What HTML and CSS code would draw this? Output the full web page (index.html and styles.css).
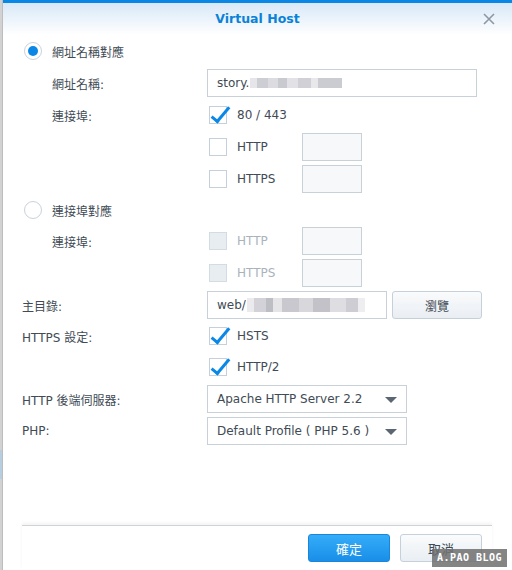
FILE: index.html
```html
<!DOCTYPE html>
<html lang="zh-Hant">
<head>
    <meta charset="UTF-8">
    <meta name="viewport" content="width=device-width, initial-scale=1.0">
    <title>Virtual Host</title>
    <link rel="stylesheet" href="styles.css">
</head>
<body>

<div class="screen">
    <div class="backdrop"></div>

    <div class="dialog">
        <div class="dialog-head">
            <span class="title">Virtual Host</span>
            <span class="close">
                <svg width="12" height="12" viewBox="0 0 12 12"><path d="M1 1 L11 11 M11 1 L1 11" stroke="#8e98a2" stroke-width="1.6" fill="none"/></svg>
            </span>
        </div>

        <div class="dialog-body">
            <!-- 網址名稱對應 -->
            <div class="row">
                <span class="radio checked"></span>
                <span class="radio-label">網址名稱對應</span>
            </div>
            <div class="row">
                <span class="field-label sub">網址名稱:</span>
                <div class="text-input host">story.<span class="blur blur-host"></span></div>
            </div>
            <div class="row">
                <span class="field-label sub">連接埠:</span>
                <span class="check checked"></span>
                <span class="check-label">80 / 443</span>
            </div>
            <div class="row">
                <span class="field-label"></span>
                <span class="check"></span>
                <span class="check-label port">HTTP</span>
                <div class="text-input small"></div>
            </div>
            <div class="row">
                <span class="field-label"></span>
                <span class="check"></span>
                <span class="check-label port">HTTPS</span>
                <div class="text-input small"></div>
            </div>

            <!-- 連接埠對應 -->
            <div class="row short">
                <span class="radio"></span>
                <span class="radio-label">連接埠對應</span>
            </div>
            <div class="row">
                <span class="field-label sub">連接埠:</span>
                <span class="check disabled"></span>
                <span class="check-label port disabled">HTTP</span>
                <div class="text-input small"></div>
            </div>
            <div class="row">
                <span class="field-label"></span>
                <span class="check disabled"></span>
                <span class="check-label port disabled">HTTPS</span>
                <div class="text-input small"></div>
            </div>

            <div class="row">
                <span class="field-label">主目錄:</span>
                <div class="text-input folder">web/<span class="blur blur-folder"></span></div>
                <button class="btn browse">瀏覽</button>
            </div>
            <div class="row short">
                <span class="field-label">HTTPS 設定:</span>
                <span class="check checked"></span>
                <span class="check-label">HSTS</span>
            </div>
            <div class="row">
                <span class="field-label"></span>
                <span class="check checked"></span>
                <span class="check-label">HTTP/2</span>
            </div>
            <div class="row">
                <span class="field-label">HTTP 後端伺服器:</span>
                <div class="select">Apache HTTP Server 2.2<span class="arrow"></span></div>
            </div>
            <div class="row">
                <span class="field-label">PHP:</span>
                <div class="select">Default Profile ( PHP 5.6 )<span class="arrow"></span></div>
            </div>
        </div>

        <div class="dialog-foot">
            <button class="btn primary">確定</button>
            <button class="btn">取消</button>
        </div>
    </div>

    <div class="watermark">A.PAO BLOG</div>
</div>

</body>
</html>
```

FILE: styles.css
```css
body {
    margin: 0;
    font-family: "DejaVu Sans", "Noto Sans CJK TC", sans-serif;
    font-size: 12px;
    color: #414b55;
    background-color: #fff;
}
.screen {
    position: relative;
    display: flex;
    width: 512px;
    height: 570px;
    overflow: hidden;
}
.backdrop {
    width: 3px;
    flex-shrink: 0;
    background: linear-gradient(to bottom, #d2d2d2 0, #d2d2d2 450px, #b7cde0 450px, #b7cde0 479px, #d2d2d2 479px);
    border-right: 1px solid #bdbdbd;
    box-sizing: border-box;
}
.dialog {
    flex: 1;
    display: flex;
    flex-direction: column;
    border-top: 3px solid #0a86e4;
    background-color: #fff;
}
.dialog-head {
    position: relative;
    height: 32px;
    display: flex;
    justify-content: center;
    align-items: center;
    background: linear-gradient(to bottom, #d8e8f7, #ffffff);
}
.title {
    font-weight: bold;
    font-size: 12.5px;
    color: #0a82d8;
    margin-top: -1px;
}
.close {
    position: absolute;
    right: 17px;
    top: 10px;
    width: 12px;
    height: 12px;
}
.close svg {
    display: block;
}
.dialog-body {
    flex: 1;
    display: flex;
    flex-direction: column;
    gap: 4px;
    padding: 2px 0 0 19px;
}
.row {
    display: flex;
    align-items: center;
    height: 28px;
}
.row.short {
    height: 26px;
}
.field-label {
    width: 185px;
    flex-shrink: 0;
    box-sizing: border-box;
}
.field-label.sub {
    padding-left: 30px;
}

/* radio */
.radio {
    position: relative;
    width: 18px;
    height: 18px;
    margin-left: 2px;
    border: 1px solid #c9d2db;
    border-radius: 50%;
    box-sizing: border-box;
    background-color: #fff;
}
.radio.checked::after {
    content: "";
    position: absolute;
    left: 3px;
    top: 3px;
    width: 10px;
    height: 10px;
    border-radius: 50%;
    background-color: #0a86e6;
}
.radio-label {
    margin-left: 10px;
}

/* checkbox */
.check {
    position: relative;
    width: 18px;
    height: 18px;
    margin-left: 2px;
    border: 1px solid #c6d0da;
    box-sizing: border-box;
    background-color: #fff;
    flex-shrink: 0;
}
.check.disabled {
    background-color: #e8edf2;
    border-color: #d3dbe3;
}
.check.checked::after {
    content: "";
    position: absolute;
    left: 6px;
    top: -4px;
    width: 6px;
    height: 17px;
    border-right: 3px solid #0a88e8;
    border-bottom: 3px solid #0a88e8;
    transform: rotate(40deg);
}
.check-label {
    margin-left: 10px;
}
.check-label.port {
    width: 65px;
}
.check-label.disabled {
    color: #a9b3bd;
}

/* inputs */
.text-input {
    height: 28px;
    border: 1px solid #c8d0d8;
    box-sizing: border-box;
    padding-left: 9px;
    display: flex;
    align-items: center;
    background-color: #fff;
}
.text-input.host {
    width: 270px;
}
.text-input.folder {
    width: 180px;
}
.text-input.small {
    width: 60px;
    background-color: #f6f8fa;
}
.blur {
    display: inline-block;
    height: 10px;
    margin-left: 1px;
}
.blur-host {
    width: 92px;
    background: linear-gradient(90deg, #e6e6ea 0, #e6e6ea 8%, #cdcdd4 8%, #cdcdd4 20%, #dcdce0 20%, #dcdce0 30%, #c9c9d0 30%, #c9c9d0 40%, #e2e2e6 40%, #e2e2e6 52%, #d0d0d6 52%, #d0d0d6 66%, #e8e8eb 66%, #e8e8eb 74%, #cbcbd2 74%, #cbcbd2 100%);
}
.blur-folder {
    width: 118px;
    height: 14px;
    background: linear-gradient(90deg, #ebebee 0, #ebebee 6%, #d2d2d8 6%, #d2d2d8 16%, #bdbdc4 16%, #bdbdc4 22%, #e5e5e8 22%, #e5e5e8 30%, #c8c8ce 30%, #c8c8ce 44%, #d8d8dc 44%, #d8d8dc 56%, #c2c2c8 56%, #c2c2c8 70%, #dedee2 70%, #dedee2 84%, #cdcdd3 84%, #cdcdd3 94%, #eeeef0 94%);
}
.select {
    position: relative;
    width: 200px;
    height: 28px;
    border: 1px solid #c8d0d8;
    box-sizing: border-box;
    padding-left: 9px;
    display: flex;
    align-items: center;
    background-color: #fff;
}
.arrow {
    position: absolute;
    right: 9px;
    top: 11px;
    width: 0;
    height: 0;
    border-left: 6px solid transparent;
    border-right: 6px solid transparent;
    border-top: 6px solid #5b6670;
}

/* buttons */
.btn {
    font-family: "DejaVu Sans", "Noto Sans CJK TC", sans-serif;
    font-size: 12px;
    color: #414b55;
    width: 82px;
    height: 28px;
    border: 1px solid #c6d0da;
    border-radius: 3px;
    background: linear-gradient(to bottom, #fafbfc, #e9eef3);
    padding: 0;
}
.btn.browse {
    width: 90px;
    margin-left: 5px;
}
.btn.primary {
    color: #fff;
    border-color: #1a86d8;
    background: linear-gradient(to bottom, #34adf9, #1a8ee8);
    font-size: 13px;
}
.dialog-foot {
    display: flex;
    justify-content: flex-end;
    gap: 10px;
    margin: 0 20px 0 19px;
    padding: 8px 10px 8px 0;
    border-top: 1px solid #cfd4d9;
    box-shadow: 0 -2px 3px rgba(0, 0, 0, 0.05);
}
.dialog-foot .btn:last-child {
    font-size: 13px;
}

/* blog mark over the corner */
.watermark {
    position: absolute;
    right: 5px;
    bottom: 3px;
    width: 75px;
    height: 18px;
    background-color: rgba(110, 110, 110, 0.85);
    color: #fff;
    font-family: "DejaVu Sans Mono", monospace;
    font-weight: bold;
    font-size: 10px;
    line-height: 18px;
    text-align: center;
    letter-spacing: 0.5px;
}
```
